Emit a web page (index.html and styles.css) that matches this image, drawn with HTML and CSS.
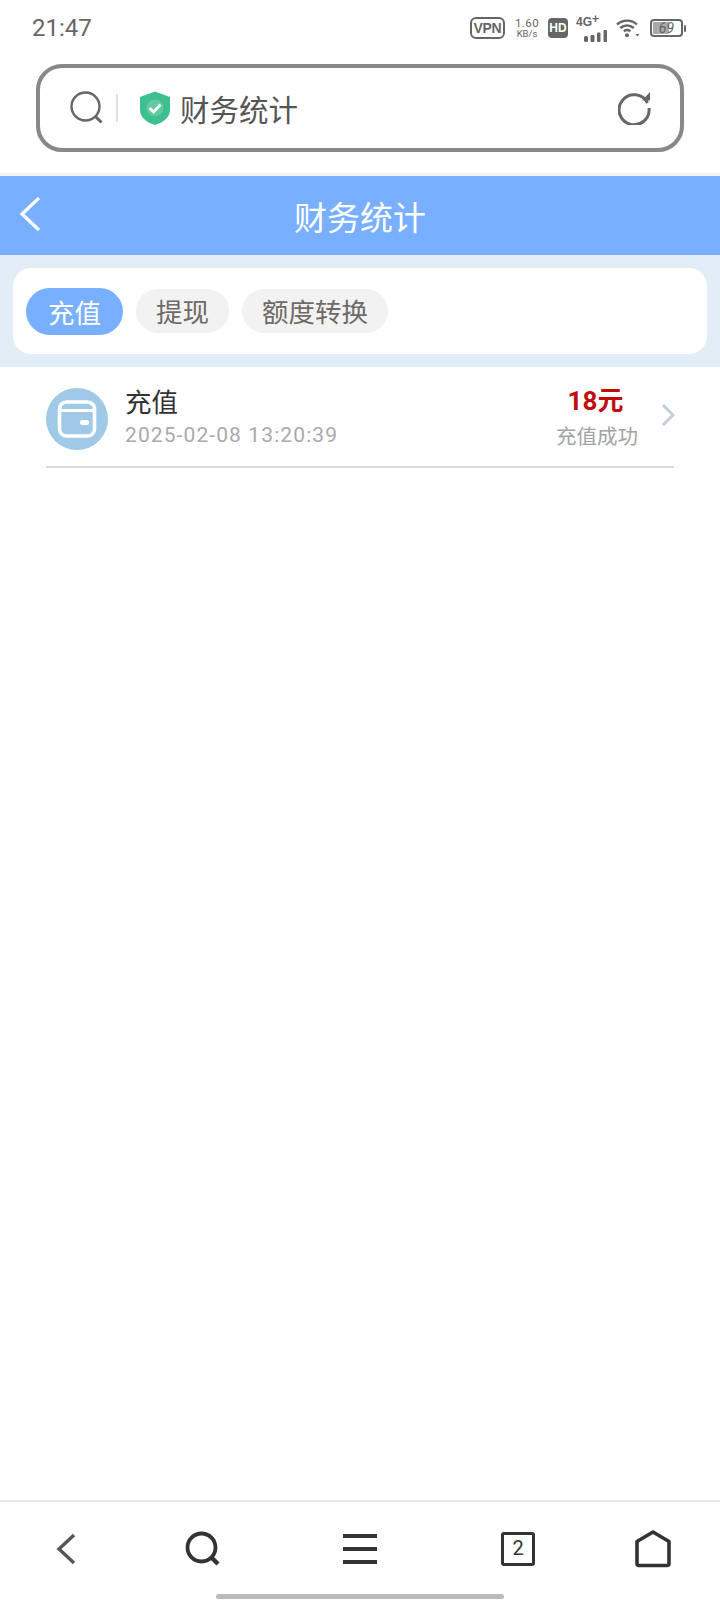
FILE: index.html
```html
<!DOCTYPE html>
<html lang="zh">
<head>
<meta charset="utf-8">
<title>财务统计</title>
<link rel="stylesheet" href="styles.css">
</head>
<body>
<div class="page">
  <div class="status">
    <span class="time">21:47</span>
    <div class="status-right">
      <span class="vpn">VPN</span>
      <span class="speed"><span class="speed-a">1.60</span><span class="speed-b">KB/s</span></span>
      <span class="hd">HD</span>
      <span class="net">
        <span class="net-t">4G<sup class="net-p">+</sup></span>
        <svg class="net-bars" viewBox="0 0 24 12" width="24" height="12"><rect x="0" y="6" width="4" height="6" rx="1.5"/><rect x="6.500" y="5" width="4" height="7" rx="1"/><rect x="13" y="2.500" width="3.500" height="9.500" rx="1"/><rect x="19.500" y="0" width="3.500" height="12" rx="1"/></svg>
      </span>
      <svg class="wifi" viewBox="0 0 24 20" width="24" height="20"><path d="M1 6.500C7 1.300 15.500 1.300 21 6.500M4.300 10C8.500 6.500 13.700 6.500 17.800 10M7.800 13.300C10 11.700 12.200 11.700 14.400 13.300" fill="none" stroke="#666" stroke-width="2.400"/><circle cx="11" cy="17.200" r="2" fill="#666"/><path d="M19.500 16h4l-2 2.500z" fill="#666"/></svg>
      <span class="battery"><span class="battery-fill"></span><span class="battery-t">69</span></span>
      <span class="battery-cap"></span>
    </div>
  </div>

  <div class="url">
    <svg class="url-search" viewBox="0 0 34 34" width="34" height="34"><circle cx="15.500" cy="15.500" r="14" fill="none" stroke="#666" stroke-width="2.400"/><path d="M25.500 25.500l6 6" stroke="#666" stroke-width="3" fill="none"/></svg>
    <span class="url-sep"></span>
    <svg class="shield" viewBox="0 0 32 34" width="32" height="34"><path d="M16 0.500L31 6V19C31 27 23 32 16 34C9 32 1 27 1 19V6Z" fill="#3dc08e"/><circle cx="16" cy="17" r="8.500" fill="#fff" fill-opacity=".18"/><path d="M10.500 17l4 4 7-7.500" fill="none" stroke="#fff" stroke-width="2.800"/></svg>
    <span class="url-text">财务统计</span>
    <svg class="reload" viewBox="0 0 34 34" width="34" height="34"><path d="M29.500 12A15 15 0 1 0 31 17" fill="none" stroke="#666" stroke-width="3"/><path d="M24 9.500h8V1z" fill="#666"/></svg>
  </div>

  <div class="top-gap"></div>

  <header class="head">
    <svg class="head-back" viewBox="0 0 22 36" width="22" height="36"><path d="M20 2L3 18l17 16" fill="none" stroke="#fff" stroke-width="3.200"/></svg>
    <h1 class="head-title">财务统计</h1>
  </header>

  <section class="tabs-wrap">
    <div class="tabs">
      <span class="tab tab-on">充值</span>
      <span class="tab">提现</span>
      <span class="tab">额度转换</span>
    </div>
  </section>

  <main class="list">
    <div class="row">
      <span class="avatar">
        <svg viewBox="0 0 40 40" width="40" height="40"><rect x="2.500" y="3" width="35" height="34" rx="7" fill="none" stroke="#fff" stroke-width="3.600"/><path d="M3 11.500H37" stroke="#fff" stroke-width="3"/><rect x="23" y="21" width="9" height="5" rx="2" fill="#fff"/></svg>
      </span>
      <div class="row-main">
        <div class="row-title">充值</div>
        <div class="row-date">2025-02-08 13:20:39</div>
      </div>
      <div class="row-side">
        <div class="row-amount">18元</div>
        <div class="row-state">充值成功</div>
      </div>
      <svg class="row-arrow" viewBox="0 0 14 24" width="14" height="24"><path d="M2 2l10 10L2 22" fill="none" stroke="#c3ced8" stroke-width="3"/></svg>
    </div>
  </main>

  <nav class="nav">
    <span class="nav-item"><svg viewBox="0 0 22 32" width="22" height="32"><path d="M19 2L4 16l15 14" fill="none" stroke="#555" stroke-width="3.400"/></svg></span>
    <span class="nav-item"><svg viewBox="0 0 36 36" width="36" height="36"><circle cx="16.500" cy="16.500" r="14" fill="none" stroke="#333" stroke-width="3.800"/><path d="M26 26l7 7" stroke="#333" stroke-width="4.500" fill="none"/></svg></span>
    <span class="nav-item"><svg viewBox="0 0 36 32" width="36" height="32"><path d="M1 3H35M1 16H35M1 29H35" stroke="#333" stroke-width="3.800" fill="none"/></svg></span>
    <span class="nav-item"><span class="nav-count">2</span></span>
    <span class="nav-item"><svg viewBox="0 0 36 38" width="36" height="38"><path d="M18 2L34 11.500V33.500a2 2 0 0 1-2 2H4a2 2 0 0 1-2-2V11.500Z" fill="none" stroke="#333" stroke-width="3.600" stroke-linejoin="round"/></svg></span>
  </nav>
  <div class="gesture"><span class="gesture-bar"></span></div>
</div>
</body>
</html>
```
FILE: styles.css
```css
* { box-sizing: border-box; }
html, body { margin: 0; padding: 0; background: #fff; }
body { font-family: "Noto Sans CJK SC", "Noto Sans", sans-serif; }
.page { width: 720px; height: 1600px; display: flex; flex-direction: column; overflow: hidden; }

.status { height: 64px; display: flex; justify-content: space-between; align-items: flex-start; padding: 0 34px 0 32px; color: #666; }
.time { font: 24px/28px Roboto, sans-serif; margin-top: 14px; }
.status-right { display: flex; align-items: center; height: 22px; margin-top: 17px; }
.vpn { width: 35px; height: 22px; border: 2px solid #666; border-radius: 6px; font: 700 14px/18px "Liberation Sans", sans-serif; text-align: center; letter-spacing: -.3px; }
.speed { width: 26px; margin-left: 9px; display: flex; flex-direction: column; align-items: center; font-family: Roboto, sans-serif; }
.speed-a { font-size: 11.500px; line-height: 11px; letter-spacing: .4px; }
.speed-b { font-size: 9.500px; line-height: 10px; }
.hd { width: 20px; height: 20px; margin-left: 8px; background: #666; color: #fff; border-radius: 4px; font: 700 12px/20px "Liberation Sans", sans-serif; text-align: center; }
.net { width: 32px; height: 24px; margin-left: 8px; position: relative; display: block; }
.net-t { display: block; font: 700 12px/12px "Liberation Sans", sans-serif; }
.net-p { font-size: 12px; line-height: 0; vertical-align: 3px; }
.net-bars { position: absolute; right: 0; bottom: -2px; fill: #666; }
.wifi { margin-left: 8px; }
.battery { width: 33px; height: 18px; margin-left: 10px; border: 2px solid #666; border-radius: 4px; position: relative; display: block; font: italic 14px/14px Roboto, sans-serif; text-align: center; }
.battery-fill { position: absolute; left: 1px; top: 1px; bottom: 1px; width: 55%; background: #a9a9a9; border-radius: 1px; }
.battery-t { position: relative; }
.battery-cap { width: 2px; height: 7px; margin-left: 1px; background: #666; border-radius: 1px; }

.url { height: 88px; margin: 0 36px; border: 4px solid #888; border-radius: 26px; display: flex; align-items: center; padding: 0 28px 0 30px; flex: none; }
.url-search { flex: none; }
.url-sep { width: 2px; height: 28px; background: #e0e0e0; margin-left: 12px; }
.shield { flex: none; margin-left: 21px; }
.url-text { margin-left: 9px; font-size: 29.500px; line-height: 40px; color: #555; flex: 1; }
.reload { flex: none; }

.top-gap { height: 24px; flex: none; background: linear-gradient(#fff 21px, #f4f4f4 21px); }

.head { height: 79px; flex: none; background: #78b0ff; display: flex; align-items: center; justify-content: center; position: relative; }
.head-back { position: absolute; left: 19px; top: 20px; }
.head-title { margin: 0; font-size: 33px; font-weight: 400; line-height: 44px; color: #fff; }

.tabs-wrap { height: 112px; flex: none; background: #e3edf8; padding: 13px 13px; }
.tabs { height: 86px; background: #fff; border-radius: 18px; display: flex; align-items: center; gap: 13px; padding: 0 13px 0 13px; }
.tab { height: 44px; padding: 0 20px; border-radius: 22px; background: #f2f2f2; color: #6f6a66; font-size: 26.500px; line-height: 44px; }
.tab-on { height: 47px; padding: 0 22px; border-radius: 24px; background: #78b0ff; color: #fff; line-height: 47px; }

.list { flex: 1; padding: 0 46px; }
.row { height: 101px; display: flex; align-items: flex-start; border-bottom: 2px solid #dcdcdc; position: relative; }
.avatar { width: 62px; height: 62px; margin-top: 21px; border-radius: 50%; background: #9fc9e6; display: flex; align-items: center; justify-content: center; flex: none; }
.row-main { margin-left: 17px; flex: 1; margin-top: 16px; }
.row-title { font-size: 26.500px; line-height: 36px; color: #333; }
.row-date { font: 21px/30px Roboto, sans-serif; color: #aaa; letter-spacing: 1.100px; margin-top: 1px; }
.row-side { width: 84px; margin-top: 16px; margin-right: 35px; text-align: center; flex: none; }
.row-amount { font-size: 26px; font-weight: 700; line-height: 36px; color: #c20d0d; font-family: Roboto, "Noto Sans CJK SC", sans-serif; padding-right: 3px; }
.row-state { font-size: 20.500px; line-height: 30px; color: #a3a3a3; margin-top: 1px; }
.row-arrow { position: absolute; right: -1px; top: 36px; }

.nav { height: 94px; flex: none; border-top: 2px solid #e8e8e8; display: grid; grid-template-columns: 132px 142px 172px 144px 1fr; align-items: center; padding: 0 4px 0 0; }
.nav-item { display: flex; align-items: center; justify-content: center; padding-top: 2px; }
.nav-count { width: 34px; height: 34px; border: 3.500px solid #333; border-radius: 3px; font: 20px/27px Roboto, sans-serif; color: #333; text-align: center; }

.gesture { height: 6px; margin-bottom: 0; flex: none; display: flex; justify-content: center; }
.gesture-bar { width: 288px; height: 5px; background: #bbb; border-radius: 3px; }
```
